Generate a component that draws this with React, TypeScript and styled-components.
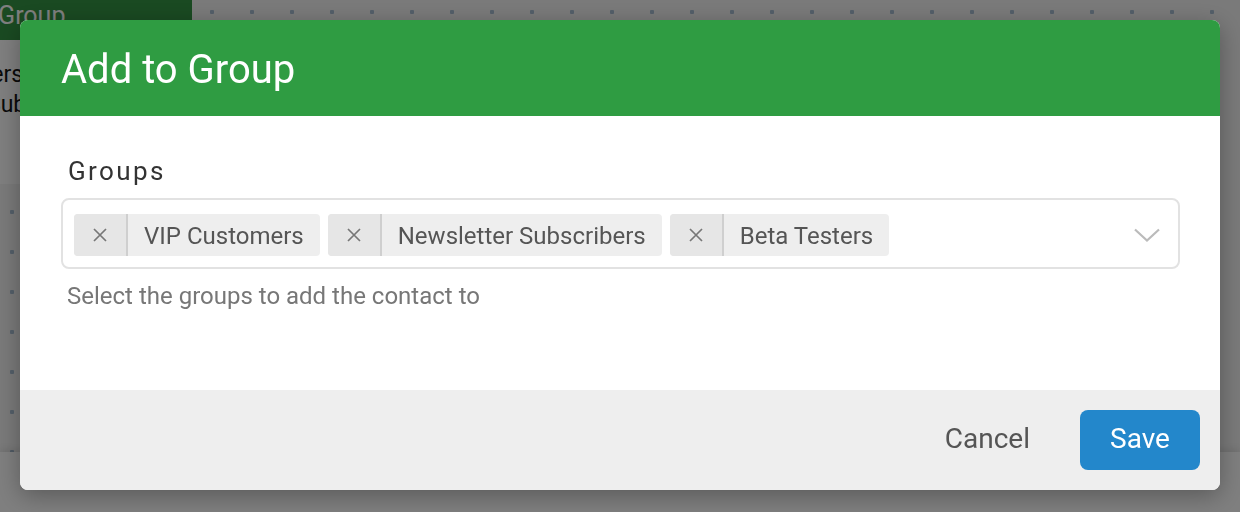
import styled, { createGlobalStyle } from "styled-components";

const GlobalStyle = createGlobalStyle`
  * { box-sizing: border-box; }
  html, body {
    margin: 0;
    padding: 0;
    height: 100%;
    font-family: Roboto, "Noto Sans", "Liberation Sans", sans-serif;
  }
  #root { height: 100%; }
`;

// page behind the dialog (scrolled, so its left edge is cut)
const Page = styled.div`
  width: 1240px;
  height: 512px;
  display: grid;
  grid-template-rows: 452px 1fr;
  overflow: hidden;
`;

const Workspace = styled.div`
  display: grid;
  grid-template-columns: 192px 1fr;
  background-color: #f4f4f4;
  background-image: radial-gradient(circle, #a9bfd4 2px, transparent 2.5px);
  background-size: 40px 40px;
  background-position: -8px -8px;
`;

const SidePanel = styled.div`
  align-self: start;
  height: 184px;
  background: #ffffff;
  overflow: hidden;
`;

const SideButton = styled.div`
  height: 40px;
  padding-top: 3px;
  background: #349444;
  color: #ffffff;
  font-size: 25px;
  line-height: 26px;
  overflow: hidden;
  white-space: nowrap;
`;

const Shifted = styled.span<{ $shift: number }>`
  display: block;
  margin-left: ${(p) => -p.$shift}px;
`;

const SideText = styled.div`
  margin-top: 20px;
  font-size: 23px;
  line-height: 30px;
  color: #151515;
  white-space: nowrap;
`;

const BottomBar = styled.div`
  background: #ffffff;
  box-shadow: 0 -2px 8px rgba(0, 0, 0, 0.1);
`;

// dialog
const Overlay = styled.div`
  position: fixed;
  inset: 0;
  background: rgba(0, 0, 0, 0.5);
  display: flex;
  align-items: flex-start;
  justify-content: center;
  padding-top: 20px;
`;

const Modal = styled.div`
  width: 1200px;
  height: 470px;
  background: #ffffff;
  border-radius: 8px;
  overflow: hidden;
  box-shadow: 0 6px 24px rgba(0, 0, 0, 0.3);
  display: flex;
  flex-direction: column;
`;

const Header = styled.div`
  height: 96px;
  flex-shrink: 0;
  background: #2f9c42;
  display: flex;
  align-items: center;
  padding: 2px 0 0 41px;
`;

const Title = styled.h2`
  margin: 0;
  font-size: 40px;
  font-weight: 400;
  color: #ffffff;
`;

const Body = styled.div`
  flex: 1;
  padding: 39px 40px 0 41px;
`;

const Label = styled.div`
  padding-left: 7px;
  font-size: 26px;
  letter-spacing: 2.4px;
  color: #333333;
  line-height: 32px;
  margin-bottom: 11px;
`;

const Select = styled.div`
  height: 71px;
  border: 2px solid #e2e2e2;
  border-radius: 8px;
  display: flex;
  align-items: center;
  padding: 3px 18px 0 11px;
  gap: 8px;
`;

const Tag = styled.div`
  height: 42px;
  display: flex;
  align-items: stretch;
  background: #eeeeee;
  border-radius: 4px;
  overflow: hidden;
`;

const TagRemove = styled.span`
  width: 54px;
  display: flex;
  align-items: center;
  justify-content: center;
  background: #e6e6e6;
  border-right: 2px solid #cfcfcf;
  color: #777777;
`;

const TagLabel = styled.span`
  display: flex;
  align-items: center;
  padding: 2px 16px 0 16px;
  font-size: 24px;
  color: #555555;
`;

const Chevron = styled.span`
  margin-left: auto;
  display: flex;
  color: #bbbbbb;
`;

const Help = styled.div`
  padding-left: 6px;
  margin-top: 13px;
  font-size: 24px;
  color: #777777;
`;

const Footer = styled.div`
  height: 100px;
  flex-shrink: 0;
  background: #eeeeee;
  display: flex;
  align-items: center;
  justify-content: flex-end;
  padding: 0 20px;
  gap: 26px;
`;

const Button = styled.button<{ $primary?: boolean }>`
  height: 60px;
  border: none;
  border-radius: 8px;
  font-family: inherit;
  font-size: 28px;
  padding: 0 ${(p) => (p.$primary ? "30px" : "24px")} 4px;
  background: ${(p) => (p.$primary ? "#2387cb" : "transparent")};
  color: ${(p) => (p.$primary ? "#ffffff" : "#555555")};
  min-width: ${(p) => (p.$primary ? "120px" : "auto")};
`;

const groups = ["VIP Customers", "Newsletter Subscribers", "Beta Testers"];

function CloseIcon() {
  return (
    <svg width="14" height="14" viewBox="0 0 14 14" fill="none" stroke="currentColor" strokeWidth="1.7">
      <path d="M1 1L13 13M13 1L1 13" />
    </svg>
  );
}

function ChevronIcon() {
  return (
    <svg width="26" height="14" viewBox="0 0 26 14" fill="none" stroke="currentColor" strokeWidth="2.2">
      <path d="M1 1.5L13 12.5L25 1.5" />
    </svg>
  );
}

export default function App() {
  return (
    <>
      <GlobalStyle />
      <Page>
        <Workspace>
          <SidePanel>
            <SideButton>
              <Shifted $shift={81}>Add to Group</Shifted>
            </SideButton>
            <SideText>
              <Shifted $shift={74}>Members</Shifted>
              <Shifted $shift={13}>Subscribers</Shifted>
            </SideText>
          </SidePanel>
          <div />
        </Workspace>
        <BottomBar />
      </Page>
      <Overlay>
        <Modal>
          <Header>
            <Title>Add to Group</Title>
          </Header>
          <Body>
            <Label>Groups</Label>
            <Select>
              {groups.map((g) => (
                <Tag key={g}>
                  <TagRemove>
                    <CloseIcon />
                  </TagRemove>
                  <TagLabel>{g}</TagLabel>
                </Tag>
              ))}
              <Chevron>
                <ChevronIcon />
              </Chevron>
            </Select>
            <Help>Select the groups to add the contact to</Help>
          </Body>
          <Footer>
            <Button>Cancel</Button>
            <Button $primary>Save</Button>
          </Footer>
        </Modal>
      </Overlay>
    </>
  );
}
